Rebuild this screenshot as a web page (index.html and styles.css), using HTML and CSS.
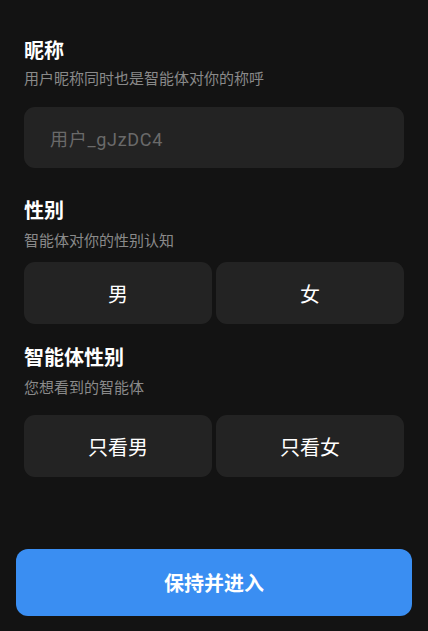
FILE: index.html
```html
<!DOCTYPE html>
<html lang="zh-CN">
<head>
<meta charset="utf-8">
<link rel="stylesheet" href="styles.css">
</head>
<body>
<div class="page">
  <section class="section">
    <div class="title">昵称</div>
    <div class="subtitle">用户昵称同时也是智能体对你的称呼</div>
    <div class="input input--first">用户_gJzDC4</div>
  </section>
  <section class="section section--second">
    <div class="title">性别</div>
    <div class="subtitle">智能体对你的性别认知</div>
    <div class="options options--second">
      <div class="option">男</div>
      <div class="option">女</div>
    </div>
  </section>
  <section class="section section--third">
    <div class="title">智能体性别</div>
    <div class="subtitle">您想看到的智能体</div>
    <div class="options options--third">
      <div class="option">只看男</div>
      <div class="option">只看女</div>
    </div>
  </section>
  <div class="submit">保持并进入</div>
</div>
</body>
</html>
```

FILE: styles.css
```css
html, body {
  margin: 0;
  padding: 0;
  background: #131313;
  height: 100%;
}
body {
  font-family: Roboto, "Noto Sans CJK SC", "Noto Sans", sans-serif;
  color: #ffffff;
}
.page {
  padding: 37px 24px 0;
  display: flex;
  flex-direction: column;
}
.section {
  display: flex;
  flex-direction: column;
}
.section--second { margin-top: 29px; }
.section--third { margin-top: 20px; }
.title {
  font-size: 20px;
  line-height: 28px;
  font-weight: 600;
  color: #ffffff;
}
.subtitle {
  margin-top: 4px;
  font-size: 15px;
  line-height: 20px;
  color: #8a8a8a;
}
.section--second .subtitle,
.section--third .subtitle { margin-top: 6px; }
.input {
  margin-top: 18px;
  height: 61px;
  border-radius: 11px;
  background: #232323;
  display: flex;
  align-items: center;
  padding-left: 26px;
  font-size: 18px;
  letter-spacing: 0.7px;
  color: #6a6a6a;
}
.options {
  display: grid;
  grid-template-columns: 1fr 1fr;
  gap: 4px;
}
.options--second { margin-top: 11px; }
.options--third { margin-top: 17px; }
.option {
  height: 62px;
  border-radius: 11px;
  background: #232323;
  display: flex;
  align-items: center;
  justify-content: center;
  font-size: 20px;
  color: #ffffff;
}
.submit {
  margin: 72px -8px 0;
  height: 67px;
  border-radius: 12px;
  background: #3a8ef2;
  display: flex;
  align-items: center;
  justify-content: center;
  font-size: 20px;
  font-weight: 700;
  color: #ffffff;
}
```
